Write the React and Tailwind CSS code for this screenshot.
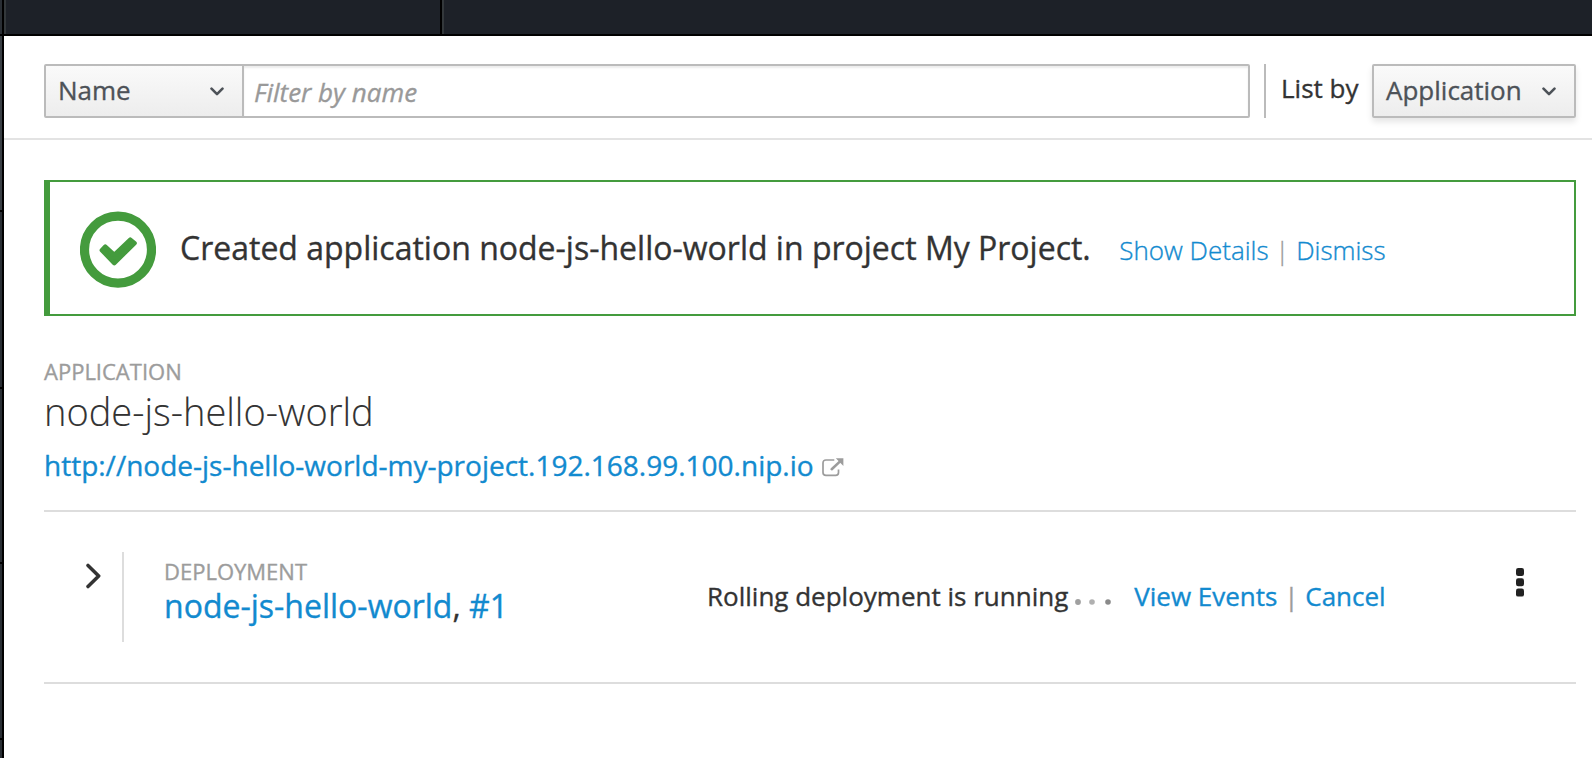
const font = "font-['Open_Sans','Noto_Sans',sans-serif]";
const link = "text-[#128acf]";

function AngleDown() {
  return (
    <svg className="h-[9px] w-[14px]" viewBox="0 0 14 9" fill="none" stroke="#4d5258" strokeWidth="2.6" strokeLinecap="round" strokeLinejoin="round">
      <path d="M1.5 1.6 7 7.1l5.5-5.5" />
    </svg>
  );
}

function SelectButton({ label, className }) {
  return (
    <button
      className={`flex h-[54px] items-center justify-between border-2 border-[#bbb] bg-linear-to-b from-[#fafafa] to-[#ededed] pl-3 text-[26px] text-[#4d5258] ${className}`}
    >
      <span className="h-[50px] leading-[48px]">{label}</span>
      <AngleDown />
    </button>
  );
}

function SideRail() {
  return (
    <div className="flex h-[758px] w-1 shrink-0 flex-col border-r-2 border-black bg-[#292e34]">
      <div className="h-9 border-b-2 border-black" />
      <div className="h-44 border-b-2 border-black bg-[#393f44]" />
      <div className="h-[177px] border-b-2 border-black" />
      <div className="h-[175px] border-b-2 border-black" />
      <div className="h-44 border-b-2 border-black" />
    </div>
  );
}

function Toolbar() {
  return (
    <div className="flex h-[104px] items-start border-b-2 border-[#e3e3e3] pt-7 pr-4 pl-10">
      <SelectButton label="Name" className="w-[200px] rounded-l-[2px] pr-[18px]" />
      <input
        className="-ml-0.5 h-[54px] w-[1008px] rounded-r-[2px] border-2 border-[#bbb] pt-0.5 pl-2.5 text-[26px] shadow-[inset_0_2px_2px_rgba(3,3,3,0.075)] placeholder:text-[#999] placeholder:italic"
        placeholder="Filter by name"
      />
      <div className="ml-3.5 h-[54px] w-0.5 bg-[#bbb]" />
      <span className="ml-[15px] w-[91px] text-[26px] leading-[48px] whitespace-nowrap text-[#333]">List by</span>
      <SelectButton label="Application" className="w-[204px] rounded-[2px] pr-[18px] shadow-[0_4px_6px_rgba(3,3,3,0.1)]" />
    </div>
  );
}

function Alert() {
  return (
    <div className="mt-10 mr-4 ml-10 flex h-[136px] items-start border-2 border-l-[6px] border-[#449b3d] whitespace-nowrap">
      <svg className="mt-[29px] ml-[30px] h-[77px] w-[76px] shrink-0" viewBox="0 0 76 77">
        <circle cx="38" cy="38.6" r="33.5" fill="none" stroke="#449b3d" strokeWidth="9.2" />
        <path d="M21.8 39.2 25.3 35.6 34.3 43.8 50.3 28.6 54.6 32.2 34.3 52.1Z" fill="#449b3d" stroke="#449b3d" strokeWidth="4.4" strokeLinejoin="round" />
      </svg>
      <p className="ml-6 pt-[42px] text-[32px] leading-[48px] text-[#333]">
        Created application node-js-hello-world in project My Project.
        <span className="ml-[28.5px] text-[26px] font-light text-[#9c9c9c]">
          <a className={link}>Show Details</a> | <a className={link}>Dismiss</a>
        </span>
      </p>
    </div>
  );
}

function Deployment() {
  return (
    <div className="mr-4 ml-10 flex h-[174px] items-start border-y-2 border-[#ddd] whitespace-nowrap">
      <div className="mt-10 flex h-[90px] w-20 border-r-2 border-[#ddd] pt-[11px] pl-[42px]">
        <svg className="h-[26px] w-4" viewBox="0 0 16 26" fill="none" stroke="#333" strokeWidth="3.5" strokeLinecap="round" strokeLinejoin="round">
          <path d="M2 2.4 12.7 13 2 23.6" />
        </svg>
      </div>
      <div className="ml-10 w-[543px] pt-[43px]">
        <div className="text-[22px] leading-[32px] text-[#9c9c9c]">DEPLOYMENT</div>
        <div className="text-[32px] leading-[38px] text-[#333]">
          <a className={link}>node-js-hello-world</a>, <a className={link}>#1</a>
        </div>
      </div>
      <div className="flex pt-[66px] text-[26px] leading-[36px] text-[#333]">
        <span>Rolling deployment is running</span>
        <svg className="mt-[21px] ml-[6.7px] h-[6px] w-[37px]" viewBox="0 0 37 6">
          <circle cx="3" cy="3" r="2.9" fill="#a0a0a0" />
          <circle cx="17" cy="3" r="2.8" fill="#b0b0b0" />
          <circle cx="33" cy="3" r="2.8" fill="#8a8a8a" />
        </svg>
        <span className="ml-[22.3px] text-[#9c9c9c]">
          <a className={link}>View Events</a> | <a className={link}>Cancel</a>
        </span>
      </div>
      <div className="mt-[55.5px] mr-[52px] ml-auto">
        <svg className="h-[29px] w-2" viewBox="0 0 8 29" fill="#222">
          <rect width="8" height="8" rx="2.2" />
          <rect y="10.3" width="8" height="8" rx="2.2" />
          <rect y="20.6" width="8" height="8" rx="2.2" />
        </svg>
      </div>
    </div>
  );
}

export default function App() {
  return (
    <div className={`flex h-[758px] w-[1592px] overflow-hidden bg-white [-webkit-text-stroke:0.35px] ${font}`}>
      <SideRail />
      <main className="flex min-w-0 flex-1 flex-col">
        <header className="flex h-9 shrink-0 border-b-2 border-black bg-[#1d2128]">
          <div className="w-[438px] border-r-2 border-l-2 border-r-black border-l-[#33383b]" />
          <div className="flex-1 border-l-2 border-[#33383b]" />
        </header>
        <Toolbar />
        <Alert />
        <section className="mt-[39px] ml-10 flex h-[155px] flex-col whitespace-nowrap">
          <div className="text-[22px] leading-[32px] text-[#9c9c9c]">APPLICATION</div>
          <h2 className="text-[38px] leading-[48px] font-light text-[#333] [-webkit-text-stroke:0.1px]">node-js-hello-world</h2>
          <div className="mt-0.5 flex text-[28px] leading-[56px]">
            <a className={link}>http://node-js-hello-world-my-project.192.168.99.100.nip.io</a>
            <svg className="mt-[21px] ml-2 h-[19px] w-[22px]" viewBox="0 0 22 19">
              <path d="M12.3 2H4Q1 2 1 5V14.5Q1 17.4 4 17.4H13.6Q16.5 17.4 16.5 14.5V11.6" fill="none" stroke="#9c9c9c" strokeWidth="1.7" />
              <path d="M9.7 11.2 17.8 3.6" fill="none" stroke="#9c9c9c" strokeWidth="2.6" strokeLinecap="round" />
              <path d="M13.8.3H21.4V7.9Z" fill="#9c9c9c" />
            </svg>
          </div>
        </section>
        <Deployment />
      </main>
    </div>
  );
}
